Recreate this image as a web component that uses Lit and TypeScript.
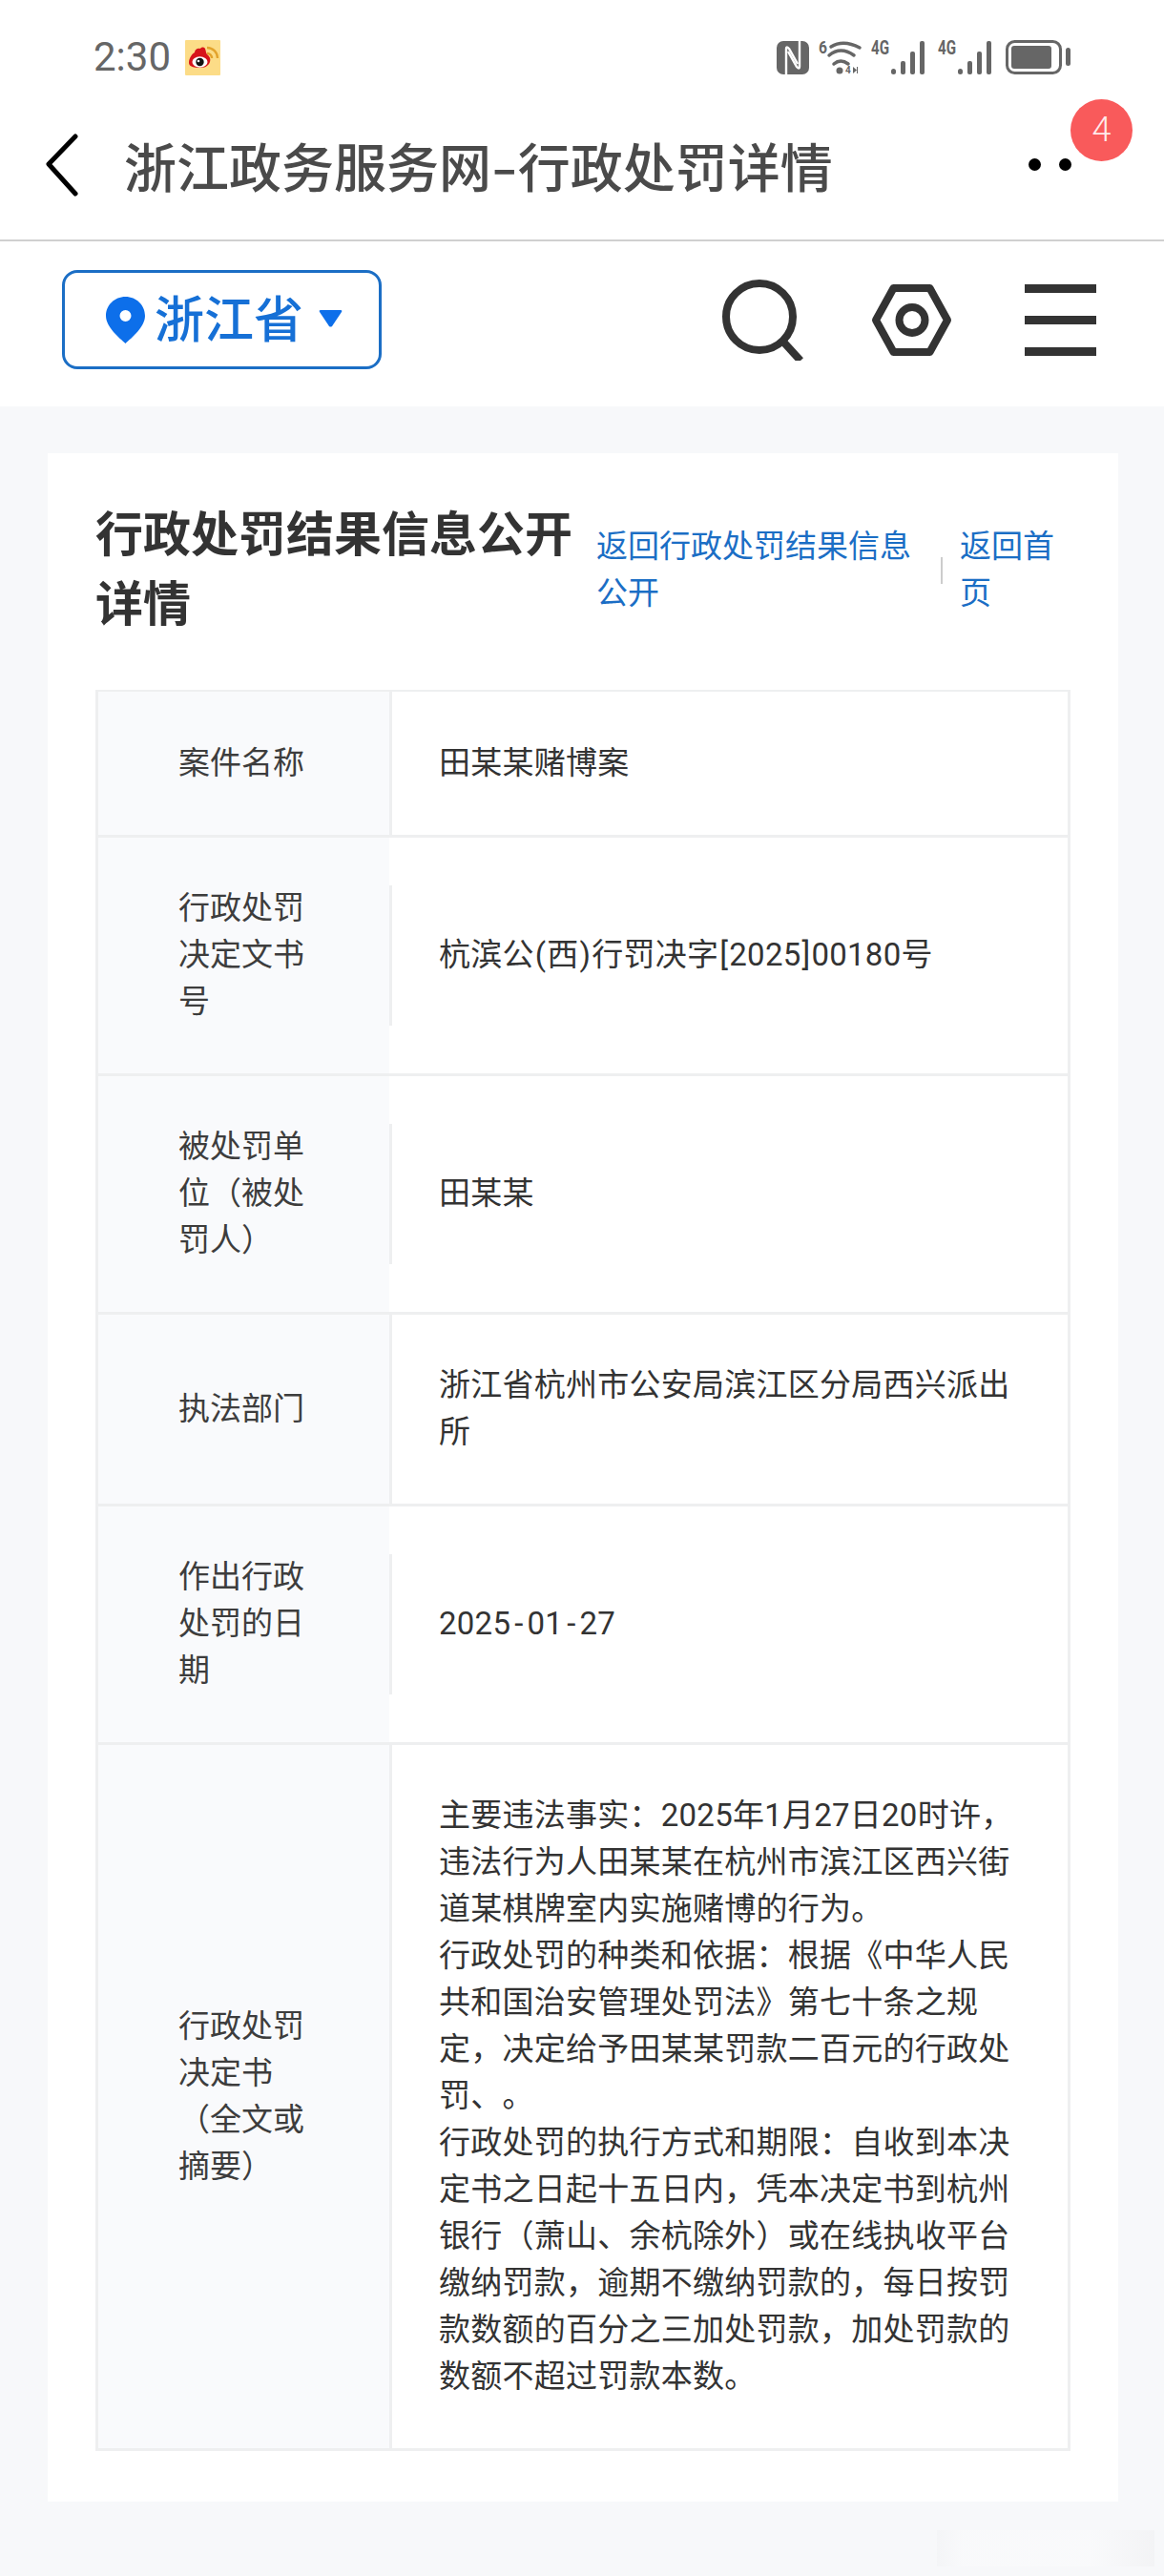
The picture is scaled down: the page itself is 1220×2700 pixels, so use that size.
import { LitElement, html, css, svg } from "lit";
import { customElement } from "lit/decorators.js";
import { classMap } from "lit/directives/class-map.js";

interface Row {
  label: string;
  value: string[];
  shortRule?: boolean;
}

const rows: Row[] = [
  { label: "案件名称", value: ["田某某赌博案"] },
  { label: "行政处罚决定文书号", value: ["杭滨公(西)行罚决字[2025]00180号"], shortRule: true },
  { label: "被处罚单位（被处罚人）", value: ["田某某"], shortRule: true },
  { label: "执法部门", value: ["浙江省杭州市公安局滨江区分局西兴派出所"] },
  { label: "作出行政处罚的日期", value: ["2025-01-27"], shortRule: true },
  {
    label: "行政处罚决定书（全文或摘要）",
    value: [
      "主要违法事实：2025年1月27日20时许，违法行为人田某某在杭州市滨江区西兴街道某棋牌室内实施赌博的行为。",
      "行政处罚的种类和依据：根据《中华人民共和国治安管理处罚法》第七十条之规定，决定给予田某某罚款二百元的行政处罚、。",
      "行政处罚的执行方式和期限：自收到本决定书之日起十五日内，凭本决定书到杭州银行（萧山、余杭除外）或在线执收平台缴纳罚款，逾期不缴纳罚款的，每日按罚款数额的百分之三加处罚款，加处罚款的数额不超过罚款本数。",
    ],
  },
];

const signal = svg`
  <rect x="0" y="29" width="5" height="6" rx="2.5" />
  <rect x="10" y="21" width="5" height="14" rx="2" />
  <rect x="20" y="11" width="5" height="24" rx="2" />
  <rect x="30" y="0" width="5" height="35" rx="2" />
`;

// the phone's font draws these marks wider than Roboto does
const spaced = (text: string) =>
  text.split(/([-()\[\]])/).map((part) =>
    part === "-"
      ? html`<span class="dash">-</span>`
      : /^[()\[\]]$/.test(part)
        ? html`<span class="bracket">${part}</span>`
        : part
  );

@customElement("app-root")
export class AppRoot extends LitElement {
  static styles = css`
    :host {
      display: block;
      min-height: 2700px;
      background: #f7f8fa;
      font-family: Roboto, "Noto Sans CJK SC", sans-serif;
      color: #333;
      text-spacing-trim: space-all;
    }
    .top {
      background: #fff;
      border-bottom: 2px solid #d0d0d0;
    }
    .status {
      display: flex;
      align-items: center;
      height: 36px;
      padding: 42px 98px 16px 98px;
    }
    .time {
      font-size: 42px;
      line-height: 36px;
      color: #666;
      margin-right: 15px;
    }
    .weibo {
      width: 37px;
      height: 37px;
    }
    .status-icons {
      display: flex;
      align-items: center;
      margin-left: auto;
      color: #666;
    }
    .status-icons svg {
      display: block;
      fill: currentColor;
    }
    .status-icons text {
      font-family: Roboto, sans-serif;
      font-weight: 700;
    }
    .nav {
      display: flex;
      align-items: center;
      height: 157px;
      padding-left: 47px;
    }
    .nav h2 {
      margin: -2px 0 0 47px;
      font-size: 55px;
      line-height: 60px;
      font-weight: 500;
      color: #4a4a4a;
      font-family: "Noto Sans CJK SC", sans-serif;
      white-space: nowrap;
    }
    .nav h2 .dash {
      display: inline-block;
      margin: 0 4px;
      transform: scaleX(1.4);
    }
    .more {
      position: relative;
      display: flex;
      gap: 19px;
      margin-left: auto;
      margin-right: 97px;
    }
    .more i {
      display: block;
      width: 13px;
      height: 13px;
      border-radius: 50%;
      background: #000;
    }
    .badge {
      position: absolute;
      left: 44px;
      top: -62px;
      width: 65px;
      height: 65px;
      border-radius: 50%;
      background: #f95a5b;
      color: #ffeaea;
      font-size: 36px;
      font-weight: 300;
      line-height: 65px;
      text-align: center;
    }
    .sub {
      display: flex;
      align-items: center;
      padding: 30px 71px 39px 65px;
      background: #fff;
    }
    .region {
      display: flex;
      align-items: center;
      box-sizing: border-box;
      width: 335px;
      height: 104px;
      padding-left: 43px;
      border: 3px solid #1b6ec5;
      border-radius: 16px;
      color: #1670d6;
      font-size: 52px;
      font-weight: 500;
      font-family: "Noto Sans CJK SC", sans-serif;
    }
    .region span {
      margin: -6px 16px 0 10px;
      line-height: 60px;
    }
    .region .pin {
      fill: #0d6fea;
    }
    .region .caret {
      fill: #0d6fea;
      margin-top: -2px;
    }
    .tools {
      display: flex;
      align-items: center;
      gap: 71px;
      margin-left: auto;
    }
    .tools svg {
      display: block;
      fill: none;
      stroke: #333;
      stroke-width: 8;
    }
    .menu {
      display: flex;
      flex-direction: column;
      gap: 24px;
      width: 75px;
    }
    .menu i {
      display: block;
      height: 9px;
      background: #333;
    }
    .card {
      margin: 49px 48px 0 50px;
      padding: 48px 50px 53px 50px;
      background: #fff;
    }
    .head {
      display: flex;
      align-items: center;
      margin-bottom: 54px;
    }
    .head h1 {
      flex: 0 0 525px;
      margin: -3px 0 3px 0;
      font-size: 50px;
      line-height: 73px;
      font-weight: 700;
      color: #333;
      font-family: "Noto Sans CJK SC", sans-serif;
    }
    .link {
      margin-top: -2px;
      font-size: 33px;
      line-height: 49px;
      color: #1b6ec5;
      font-family: "Noto Sans CJK SC", sans-serif;
    }
    .link.back {
      width: 335px;
    }
    .link.home {
      width: 115px;
    }
    .sep {
      width: 2px;
      height: 28px;
      margin: 4px 18px 0 26px;
      background: #ccc;
    }
    .table {
      border: solid #eeeff0;
      border-width: 2px 3px 3px 3px;
    }
    .row {
      display: grid;
      grid-template-columns: 305px 1fr;
      min-height: 150px;
      border-bottom: 3px solid #eeeff0;
    }
    .row:last-child {
      border-bottom: 0;
    }
    .label {
      display: flex;
      align-items: center;
      padding: 47px 88px 53px 84px;
      background: #f9fafc;
      font-size: 33px;
      line-height: 49px;
      color: #3d3d3d;
      font-family: "Noto Sans CJK SC", sans-serif;
    }
    .value {
      position: relative;
      display: flex;
      flex-direction: column;
      justify-content: center;
      padding: 49px 52px 51px 52px;
      font-size: 33px;
      letter-spacing: 0.25px;
      line-height: 49px;
      color: #333;
    }
    .value .dash {
      padding: 0 4px;
    }
    .value .bracket {
      padding: 0 1px;
    }
    .value::before {
      content: "";
      position: absolute;
      left: 0;
      top: 0;
      bottom: 0;
      width: 3px;
      background: #eeeff0;
    }
    .value.short::before {
      top: 50px;
      bottom: 50px;
    }
    .smudge {
      width: 228px;
      height: 38px;
      margin: 30px 10px 0 auto;
      background: linear-gradient(90deg, #eff0f2 0, #fbfbfc 12%, #fcfcfd 70%, #ececee 100%);
      opacity: 0.4;
    }
  `;

  renderStatusIcons() {
    return html`
      <div class="status-icons">
        <svg width="34" height="35" viewBox="0 0 34 35">
          <rect width="34" height="35" rx="7" />
          <g fill="none" stroke="#fff" stroke-width="2.4">
            <path d="M10 35V8Q10 5 13 8L22 24" />
            <path d="M24 0V27Q24 30 21 27L12 11" />
          </g>
        </svg>
        <svg width="46" height="46" viewBox="0 -5 46 46" style="margin-left:10px">
          <text x="0" y="14" font-size="18" textLength="9" lengthAdjust="spacingAndGlyphs">6</text>
          <g fill="none" stroke="currentColor" stroke-width="3.5" stroke-linecap="round">
            <path d="M13 7Q26-1 43 8" />
            <path d="M11 16Q23 6 37 16" />
            <path d="M16 25Q23 19 31 25" />
          </g>
          <circle cx="22" cy="32" r="3.5" />
          <text x="28" y="35" font-size="10">4</text>
          <path d="M36 28l4 3.500-4 3.500zM40 28h1v7h-1z" />
        </svg>
        <svg width="56" height="46" viewBox="0 -5 56 46" style="margin-left:9px">
          <text x="0" y="15" font-size="20" textLength="19" lengthAdjust="spacingAndGlyphs">4G</text>
          <g transform="translate(21 1)">${signal}</g>
        </svg>
        <svg width="56" height="46" viewBox="0 -5 56 46" style="margin-left:14px">
          <text x="0" y="15" font-size="20" textLength="19" lengthAdjust="spacingAndGlyphs">4G</text>
          <g transform="translate(21 1)">${signal}</g>
        </svg>
        <svg width="68" height="36" viewBox="0 0 68 36" style="margin-left:15px">
          <rect x="1.500" y="1.500" width="56" height="33" rx="8" fill="none" stroke="currentColor" stroke-width="3" />
          <rect x="6" y="6" width="42" height="24" rx="3" />
          <rect x="63" y="8" width="5" height="19" rx="2.500" />
        </svg>
      </div>
    `;
  }

  render() {
    return html`
      <div class="top">
        <div class="status">
          <span class="time">2:30</span>
          <svg class="weibo" viewBox="0 0 37 37">
            <rect width="37" height="37" rx="1" fill="#fcdc87" />
            <g fill="none" stroke="#e3a32c" stroke-width="2.4">
              <path d="M23 14a5 5 0 0 1 5 5" />
              <path d="M23 8a11 11 0 0 1 11 11" />
            </g>
            <path d="M4 24C4 18 8 14 10 13c0-3 3-5 6-4 1-2 4-2 5 0 1 3 1 5 2 6 3 2 4 5 3 8-2 5-6 6-11 6S4 28 4 24z" fill="#d7141a" />
            <ellipse cx="15.500" cy="23" rx="8" ry="5.800" fill="#fff" />
            <circle cx="15.500" cy="23" r="4.200" fill="#111" />
            <circle cx="14" cy="22" r="1.300" fill="#fff" />
          </svg>
          ${this.renderStatusIcons()}
        </div>
        <div class="nav">
          <svg width="36" height="66" viewBox="0 0 36 66">
            <path d="M32 3 4 32l28 31" fill="none" stroke="#000" stroke-width="5" stroke-linecap="round" stroke-linejoin="round" />
          </svg>
          <h2>浙江政务服务网<span class="dash">-</span>行政处罚详情</h2>
          <div class="more">
            <i></i><i></i>
            <span class="badge">4</span>
          </div>
        </div>
      </div>
      <div class="sub">
        <div class="region">
          <svg class="pin" width="41" height="49" viewBox="0 0 41 49">
            <path fill-rule="evenodd" d="M20.500 0C9 0 0 9 0 20c0 12 14 23 20.500 29C27 43 41 32 41 20 41 9 32 0 20.500 0zm0 14a6 6 0 1 1 0 12 6 6 0 0 1 0-12z" />
          </svg>
          <span>浙江省</span>
          <svg class="caret" width="25" height="18" viewBox="0 0 25 18">
            <path d="M2 0h21q2 0 1 2L14 17q-1.500 1-3 0L1 2Q0 0 2 0z" />
          </svg>
        </div>
        <div class="tools">
          <svg width="85" height="85" viewBox="0 0 85 85">
            <circle cx="39" cy="39" r="35" />
            <path d="M62 63l20 22" />
          </svg>
          <svg width="90" height="75" viewBox="0 0 90 75">
            <path d="M5 37.500 23.500 4h38L80 37.500 61.500 71h-38z" stroke-linejoin="round" />
            <circle cx="43" cy="37.500" r="13.500" />
          </svg>
          <div class="menu"><i></i><i></i><i></i></div>
        </div>
      </div>
      <div class="card">
        <div class="head">
          <h1>行政处罚结果信息公开详情</h1>
          <div class="link back">返回行政处罚结果信息公开</div>
          <div class="sep"></div>
          <div class="link home">返回首页</div>
        </div>
        <div class="table">
          ${rows.map(
            (row) => html`
              <div class="row">
                <div class="label"><span>${row.label}</span></div>
                <div class=${classMap({ value: true, short: !!row.shortRule })}>
                  ${row.value.map((line) => html`<div>${spaced(line)}</div>`)}
                </div>
              </div>
            `
          )}
        </div>
      </div>
      <div class="smudge"></div>
    `;
  }
}
